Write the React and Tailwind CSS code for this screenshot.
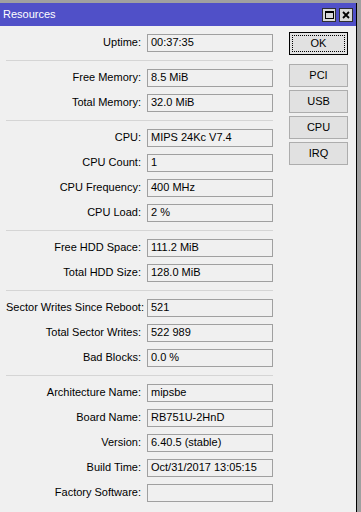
import React from 'react';

const groups = [
  [['Uptime', '00:37:35']],
  [
    ['Free Memory', '8.5 MiB'],
    ['Total Memory', '32.0 MiB'],
  ],
  [
    ['CPU', 'MIPS 24Kc V7.4'],
    ['CPU Count', '1'],
    ['CPU Frequency', '400 MHz'],
    ['CPU Load', '2 %'],
  ],
  [
    ['Free HDD Space', '111.2 MiB'],
    ['Total HDD Size', '128.0 MiB'],
  ],
  [
    ['Sector Writes Since Reboot', '521'],
    ['Total Sector Writes', '522 989'],
    ['Bad Blocks', '0.0 %'],
  ],
  [
    ['Architecture Name', 'mipsbe'],
    ['Board Name', 'RB751U-2HnD'],
    ['Version', '6.40.5 (stable)'],
    ['Build Time', 'Oct/31/2017 13:05:15'],
    ['Factory Software', ''],
  ],
];

const Row = ({ label, value }) => (
  <div className="h-[25px] flex items-center">
    <div className="w-[135px] text-right whitespace-nowrap">{label}:</div>
    <div className="ml-[6px] w-[126px] h-[18px] border border-[#a0a0a0] flex items-center pl-[3px] whitespace-nowrap">
      {value}
    </div>
  </div>
);

const SideButton = ({ children }) => (
  <button className="h-[23px] w-full border border-[#adadad] bg-[#e1e1e1] flex items-center justify-center">
    {children}
  </button>
);

export default function App() {
  return (
    <div
      className="w-[361px] h-[512px] bg-[#a0a0a0] pt-[3px] flex text-[11px] text-black overflow-hidden"
      style={{ fontFamily: '"Liberation Sans", Arial, sans-serif' }}
    >
      <div className="w-[357px] h-full border-r border-black flex flex-col bg-[#f0f0f0]">
        {/* Title bar */}
        <div className="h-[23px] bg-[#5050c8] flex items-center pl-[3px] pr-[3px]">
          <span className="text-white">Resources</span>
          <div className="ml-auto flex gap-[3px]">
            <div className="w-[14px] h-[14px] bg-[#d8d8d8] border border-[#303030] flex items-center justify-center">
              <div className="w-[9px] h-[8px] border border-black border-t-2"></div>
            </div>
            <div className="w-[14px] h-[14px] bg-[#d8d8d8] border border-[#303030] flex items-center justify-center">
              <svg width="8" height="8" viewBox="0 0 8 8">
                <path d="M1 1 L7 7 M7 1 L1 7" stroke="black" strokeWidth="1.8" />
              </svg>
            </div>
          </div>
        </div>

        {/* Body */}
        <div className="flex-1 flex">
          <div className="pl-[6px] pt-[4px] w-[273px]">
            {groups.map((g, i) => (
              <div key={i}>
                {i > 0 && (
                  <div className="h-[10px] flex items-center">
                    <div className="w-[267px] h-px bg-[#d5d5d5]"></div>
                  </div>
                )}
                {g.map(([label, value]) => (
                  <Row key={label} label={label} value={value} />
                ))}
              </div>
            ))}
          </div>

          <div className="ml-[16px] w-[59px] pt-[6px] flex flex-col">
            <button className="h-[23px] w-full border border-black bg-[#e1e1e1] p-[2px]">
              <div className="w-full h-full border border-dotted border-black flex items-center justify-center">
                OK
              </div>
            </button>
            <div className="mt-[9px] flex flex-col gap-[3px]">
              <SideButton>PCI</SideButton>
              <SideButton>USB</SideButton>
              <SideButton>CPU</SideButton>
              <SideButton>IRQ</SideButton>
            </div>
          </div>
        </div>
      </div>
    </div>
  );
}
